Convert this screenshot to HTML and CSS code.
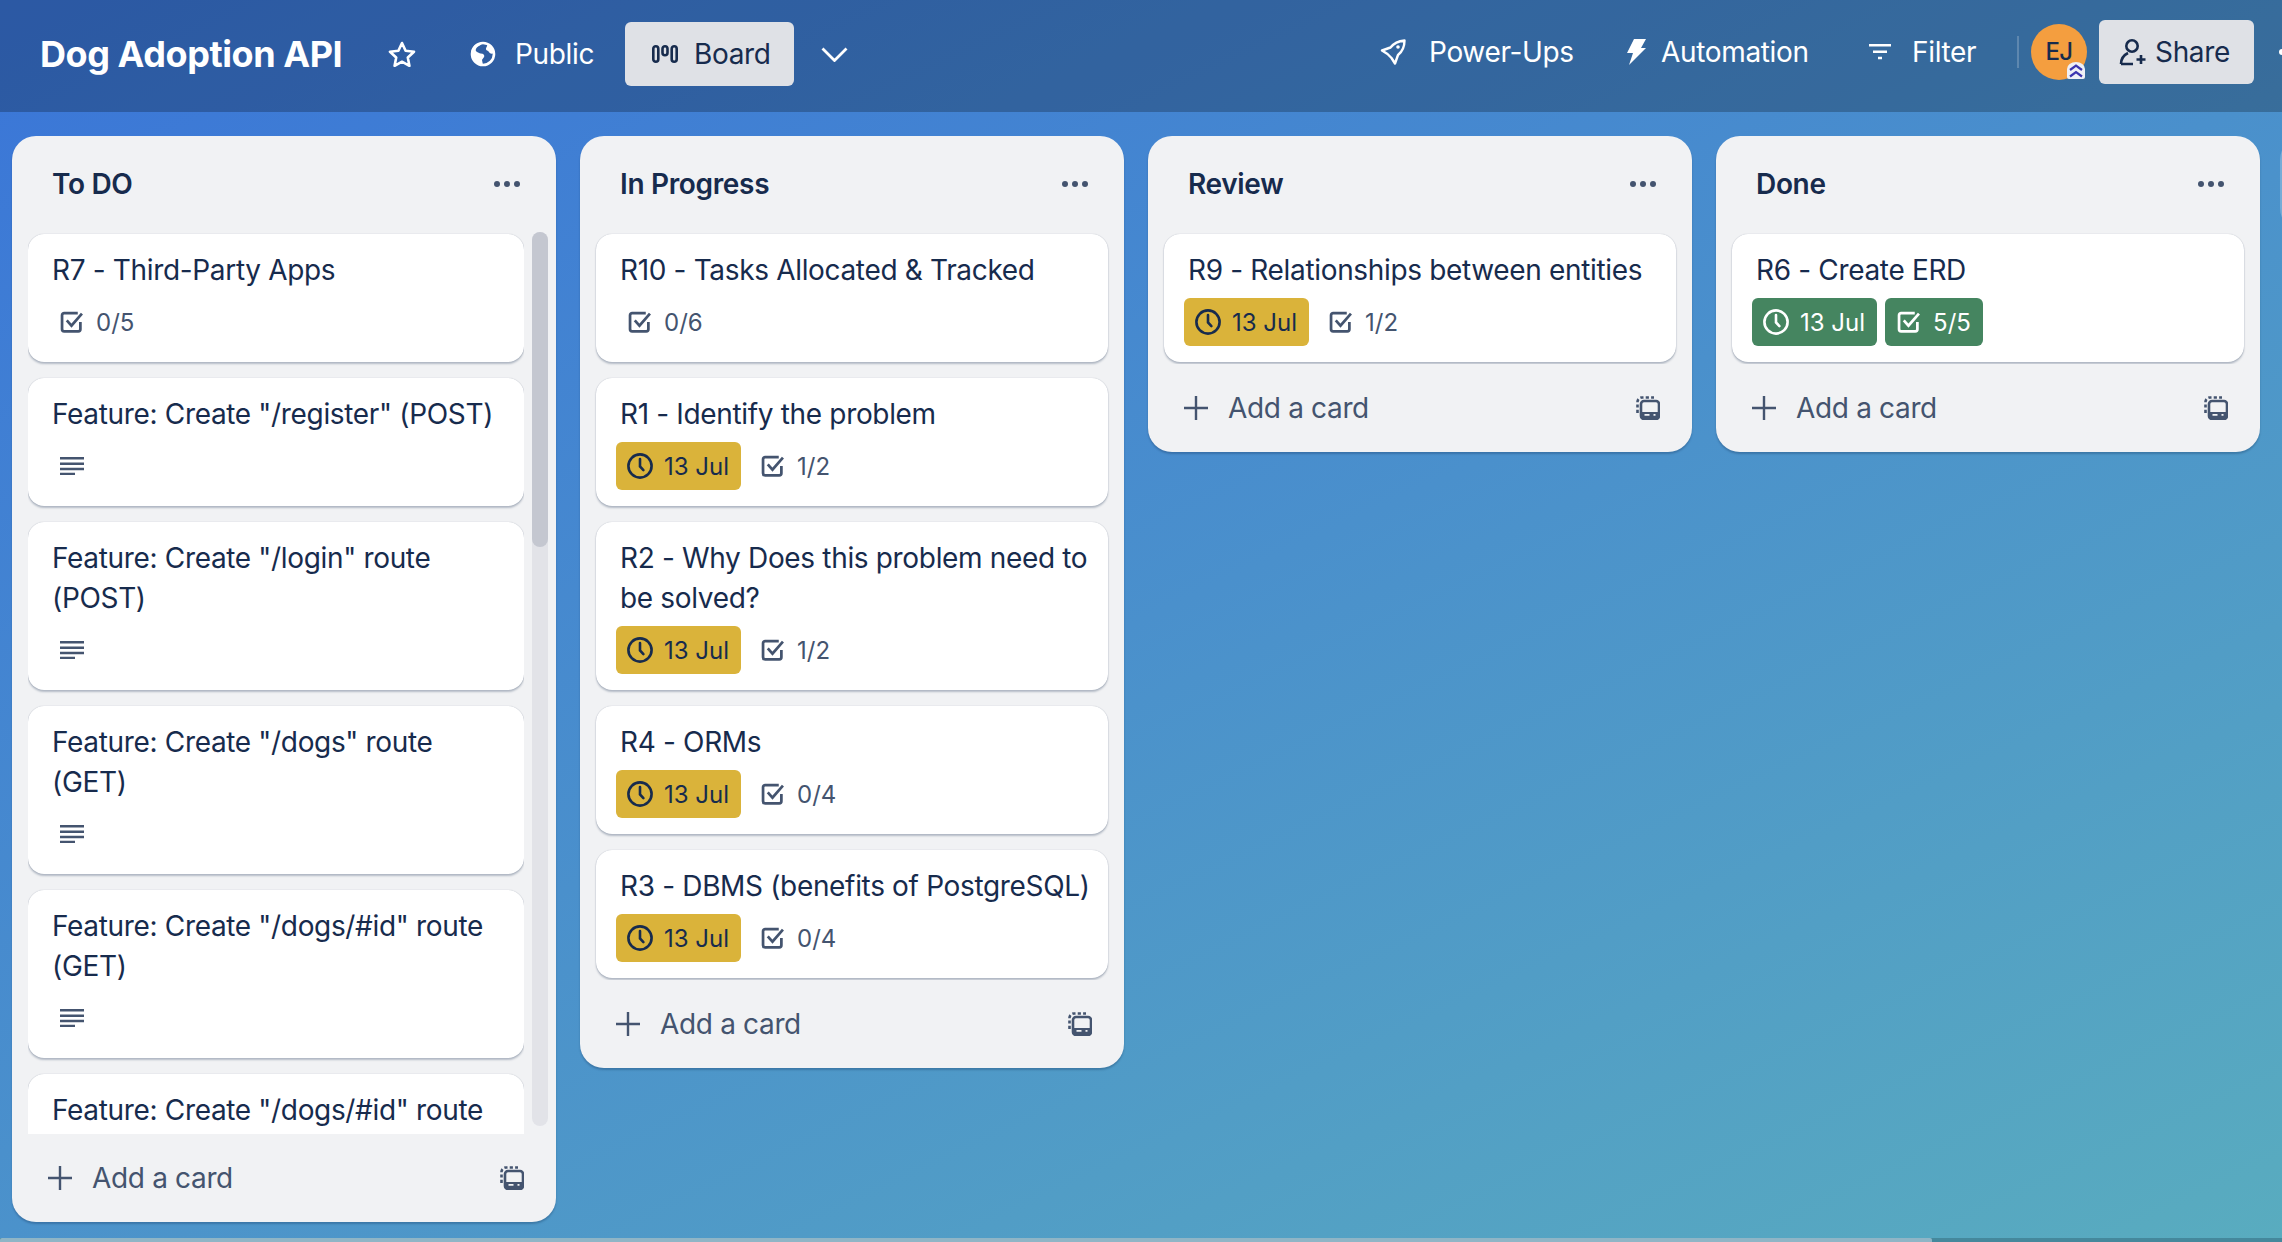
FILE: index.html
```html
<!DOCTYPE html>
<html lang="en">
<head>
    <meta charset="UTF-8">
    <title>Dog Adoption API | Trello</title>
    <link rel="stylesheet" href="styles.css">
</head>
<body>
    <!-- shared icons -->
    <svg class="defs" width="0" height="0">
        <symbol id="i-check" viewBox="0.5 1 21 21">
            <path d="M19 11.500V18.500a2 2 0 0 1-2 2H3.500a2 2 0 0 1-2-2V5a2 2 0 0 1 2-2h13" fill="none" stroke="currentColor" stroke-width="2.600"/>
            <path d="M6 10l4.500 5L20.500 3.500" fill="none" stroke="currentColor" stroke-width="2.600"/>
        </symbol>
        <symbol id="i-clock" viewBox="0 0 26 26">
            <circle cx="13" cy="13" r="11.600" fill="none" stroke="currentColor" stroke-width="2.600"/>
            <path d="M13 6v7.500l3.400 3.600" fill="none" stroke="currentColor" stroke-width="2.600" stroke-linecap="round"/>
        </symbol>
        <symbol id="i-desc" viewBox="0 0 24 18">
            <path d="M0 1.300h24M0 6.800h24M0 12h24M0 17h15" fill="none" stroke="currentColor" stroke-width="2.400"/>
        </symbol>
        <symbol id="i-plus" viewBox="0 0 24 24">
            <path d="M12 0v24M0 12h24" fill="none" stroke="currentColor" stroke-width="2.400"/>
        </symbol>
        <symbol id="i-template" viewBox="0 0 24 24">
            <path d="M1.500 17V6a4.500 4.500 0 0 1 4.500-4.500h12" fill="none" stroke="currentColor" stroke-width="2.600" stroke-dasharray="3.200 2.200"/>
            <rect x="5" y="5" width="18" height="18" rx="3" fill="none" stroke="currentColor" stroke-width="2.600"/>
            <path d="M5 16h18v5a2 2 0 0 1-2 2H7a2 2 0 0 1-2-2z" fill="currentColor"/>
            <path d="M8.500 18.800h5M17.500 18.800h2" stroke="#f1f2f4" stroke-width="1.800"/>
        </symbol>
    </svg>

    <header class="topbar">
        <h1 class="board-title">Dog Adoption API</h1>
        <svg class="tb-star" width="28" height="26" viewBox="0 0 28 26"><path d="M14 2l3.600 7.700 8.400 1-6.200 5.800 1.600 8.300L14 20.700 6.600 24.800l1.600-8.300L2 10.700l8.400-1z" fill="none" stroke="currentColor" stroke-width="2.600" stroke-linejoin="round"/></svg>
        <div class="tb-item tb-public">
            <svg width="26" height="26" viewBox="0 0 26 26"><circle cx="13" cy="13" r="11" fill="none" stroke="currentColor" stroke-width="2.600"/><path d="M12 2c-1 3-5 3-6 6-1 2 1 3 3 4s4 0 5 2-1 3-2 5l1 5C6 24 1 19 1 13S6 1 12 2zM17 3c2 1 6 4 7 9-2 1-4 1-5-1s-3-1-3-3 2-3 1-5z" fill="currentColor"/></svg>
            <span>Public</span>
        </div>
        <button class="tb-btn tb-board">
            <svg width="26" height="18" viewBox="0 0 26 18"><rect x="1.300" y="1.300" width="5" height="15.400" rx="2.500" fill="none" stroke="currentColor" stroke-width="2.600"/><rect x="10.500" y="1.300" width="5" height="9" rx="2.500" fill="none" stroke="currentColor" stroke-width="2.600"/><rect x="19.700" y="1.300" width="5" height="15.400" rx="2.500" fill="none" stroke="currentColor" stroke-width="2.600"/></svg>
            Board
        </button>
        <svg class="tb-chevron" width="27" height="15" viewBox="0 0 27 15"><path d="M1.500 1.500l12 12 12-12" fill="none" stroke="currentColor" stroke-width="2.800"/></svg>

        <div class="tb-right">
            <div class="tb-item tb-powerups">
                <svg width="26" height="26" viewBox="0 0 26 26"><path d="M24.500 1.500c-6 .5-10.500 2.500-14 7L2 11.500l5.500 3.500 4 4 3.500 5.500 3-8.500c4.500-3.500 6.500-8.500 6.500-14.500z" fill="none" stroke="currentColor" stroke-width="2.400" stroke-linejoin="round"/><circle cx="18" cy="8" r="1.800" fill="currentColor"/></svg>
                <span>Power-Ups</span>
            </div>
            <div class="tb-item tb-automation">
                <svg width="20" height="26" viewBox="0 0 20 26"><path d="M8 0h12l-5 9h5L3 26l4-12H1z" fill="currentColor"/></svg>
                <span>Automation</span>
            </div>
            <div class="tb-item tb-filter">
                <svg width="22" height="16" viewBox="0 0 22 16"><path d="M0 1.300h22M4 7.800h14M9 14h4" fill="none" stroke="currentColor" stroke-width="2.600"/></svg>
                <span>Filter</span>
            </div>
            <div class="tb-sep"></div>
            <div class="avatar">
                EJ
                <svg class="avatar-badge" width="18" height="17" viewBox="0 0 18 17"><path d="M0 7a9 7 0 0 1 18 0v8a2 2 0 0 1-2 2H2a2 2 0 0 1-2-2z" fill="#eef0f6"/><path d="M3 8l6-4.500L15 8M3 14.500L9 10l6 4.500" fill="none" stroke="#3b35b0" stroke-width="2.200"/></svg>
            </div>
            <button class="tb-btn tb-share">
                <svg width="28" height="28" viewBox="0 0 28 28"><circle cx="13" cy="8" r="5.700" fill="none" stroke="currentColor" stroke-width="2.600"/><path d="M2 26c0-6 3-9 7-11M14 26H2" fill="none" stroke="currentColor" stroke-width="2.600"/><path d="M22 17v9M17.500 21.500h9" stroke="currentColor" stroke-width="2.600"/></svg>
                Share
            </button>
            <span class="tb-more"></span>
        </div>
    </header>

    <main class="board">
        <section class="list list-scroll">
            <h2 class="list-head">To DO <span class="dots"><i></i><i></i><i></i></span></h2>
            <div class="list-body">
                <div class="cards">
                    <article class="card">
                        <p class="card-title">R7 - Third-Party Apps</p>
                        <div class="badges">
                            <span class="badge"><svg><use href="#i-check"/></svg>0/5</span>
                        </div>
                    </article>
                    <article class="card">
                        <p class="card-title">Feature: Create "/register" (POST)</p>
                        <div class="badges"><span class="badge"><svg class="ic-desc"><use href="#i-desc"/></svg></span></div>
                    </article>
                    <article class="card">
                        <p class="card-title">Feature: Create "/login" route (POST)</p>
                        <div class="badges"><span class="badge"><svg class="ic-desc"><use href="#i-desc"/></svg></span></div>
                    </article>
                    <article class="card">
                        <p class="card-title">Feature: Create "/dogs" route (GET)</p>
                        <div class="badges"><span class="badge"><svg class="ic-desc"><use href="#i-desc"/></svg></span></div>
                    </article>
                    <article class="card">
                        <p class="card-title">Feature: Create "/dogs/#id" route (GET)</p>
                        <div class="badges"><span class="badge"><svg class="ic-desc"><use href="#i-desc"/></svg></span></div>
                    </article>
                    <article class="card">
                        <p class="card-title">Feature: Create "/dogs/#id" route</p>
                        <div class="badges"><span class="badge"><svg class="ic-desc"><use href="#i-desc"/></svg></span></div>
                    </article>
                </div>
                <div class="scrolltrack"><div class="scrollthumb"></div></div>
            </div>
            <footer class="list-foot">
                <svg class="ic-plus"><use href="#i-plus"/></svg>
                <span>Add a card</span>
                <svg class="ic-template"><use href="#i-template"/></svg>
            </footer>
        </section>

        <section class="list">
            <h2 class="list-head">In Progress <span class="dots"><i></i><i></i><i></i></span></h2>
            <div class="cards">
                <article class="card">
                    <p class="card-title">R10 - Tasks Allocated &amp; Tracked</p>
                    <div class="badges">
                        <span class="badge"><svg><use href="#i-check"/></svg>0/6</span>
                    </div>
                </article>
                <article class="card">
                    <p class="card-title">R1 - Identify the problem</p>
                    <div class="badges">
                        <span class="badge badge-due"><svg class="ic-clock"><use href="#i-clock"/></svg>13 Jul</span>
                        <span class="badge"><svg><use href="#i-check"/></svg>1/2</span>
                    </div>
                </article>
                <article class="card">
                    <p class="card-title">R2 - Why Does this problem need to be solved?</p>
                    <div class="badges">
                        <span class="badge badge-due"><svg class="ic-clock"><use href="#i-clock"/></svg>13 Jul</span>
                        <span class="badge"><svg><use href="#i-check"/></svg>1/2</span>
                    </div>
                </article>
                <article class="card">
                    <p class="card-title">R4 - ORMs</p>
                    <div class="badges">
                        <span class="badge badge-due"><svg class="ic-clock"><use href="#i-clock"/></svg>13 Jul</span>
                        <span class="badge"><svg><use href="#i-check"/></svg>0/4</span>
                    </div>
                </article>
                <article class="card">
                    <p class="card-title">R3 - DBMS (benefits of PostgreSQL)</p>
                    <div class="badges">
                        <span class="badge badge-due"><svg class="ic-clock"><use href="#i-clock"/></svg>13 Jul</span>
                        <span class="badge"><svg><use href="#i-check"/></svg>0/4</span>
                    </div>
                </article>
            </div>
            <footer class="list-foot">
                <svg class="ic-plus"><use href="#i-plus"/></svg>
                <span>Add a card</span>
                <svg class="ic-template"><use href="#i-template"/></svg>
            </footer>
        </section>

        <section class="list">
            <h2 class="list-head">Review <span class="dots"><i></i><i></i><i></i></span></h2>
            <div class="cards">
                <article class="card">
                    <p class="card-title">R9 - Relationships between entities</p>
                    <div class="badges">
                        <span class="badge badge-due"><svg class="ic-clock"><use href="#i-clock"/></svg>13 Jul</span>
                        <span class="badge"><svg><use href="#i-check"/></svg>1/2</span>
                    </div>
                </article>
            </div>
            <footer class="list-foot">
                <svg class="ic-plus"><use href="#i-plus"/></svg>
                <span>Add a card</span>
                <svg class="ic-template"><use href="#i-template"/></svg>
            </footer>
        </section>

        <section class="list">
            <h2 class="list-head">Done <span class="dots"><i></i><i></i><i></i></span></h2>
            <div class="cards">
                <article class="card">
                    <p class="card-title">R6 - Create ERD</p>
                    <div class="badges">
                        <span class="badge badge-done"><svg class="ic-clock"><use href="#i-clock"/></svg>13 Jul</span>
                        <span class="badge badge-done"><svg><use href="#i-check"/></svg>5/5</span>
                    </div>
                </article>
            </div>
            <footer class="list-foot">
                <svg class="ic-plus"><use href="#i-plus"/></svg>
                <span>Add a card</span>
                <svg class="ic-template"><use href="#i-template"/></svg>
            </footer>
        </section>

        <div class="add-list"></div>
    </main>

    <div class="hscroll"><div class="hscroll-thumb"></div></div>
</body>
</html>
```

FILE: styles.css
```css
* {
    box-sizing: border-box;
}
html, body {
    height: 100%;
}
body {
    margin: 0;
    display: flex;
    flex-direction: column;
    overflow: hidden;
    font-family: Inter, "Noto Sans", sans-serif;
    color: #172b4d;
    background: linear-gradient(155deg, #3a75d8 0%, #4a90cc 50%, #59acbf 100%);
}
.defs {
    position: absolute;
}

/* top bar */
.topbar {
    flex: none;
    height: 112px;
    display: flex;
    align-items: center;
    padding-left: 40px;
    padding-bottom: 4px;
    color: #fff;
    background: rgba(0, 0, 0, 0.24);
}
.board-title {
    margin: 0;
    font-size: 36px;
    font-weight: 700;
    line-height: 44px;
    letter-spacing: -0.012em;
    width: 348px;
}
.tb-star {
    flex: none;
    margin-right: 54px;
}
.tb-item {
    display: flex;
    align-items: center;
    font-size: 28px;
    line-height: 40px;
    letter-spacing: -0.012em;
}
.tb-public {
    gap: 19px;
    width: 155px;
}
.tb-btn {
    display: flex;
    align-items: center;
    font: inherit;
    font-size: 28px;
    letter-spacing: -0.012em;
    color: #172b4d;
    background: #dfe1e6;
    border: 0;
    border-radius: 6px;
}
.tb-board {
    height: 64px;
    width: 169px;
    padding-left: 27px;
    gap: 16px;
}
.tb-chevron {
    margin-left: 27px;
}
.tb-right {
    margin-left: auto;
    display: flex;
    align-items: center;
    height: 100%;
    padding-bottom: 4px;
}
.tb-powerups {
    gap: 23px;
    width: 246px;
}
.tb-automation {
    gap: 15px;
    width: 243px;
}
.tb-filter {
    gap: 21px;
    width: 148px;
}
.tb-sep {
    width: 2px;
    height: 32px;
    margin-right: 12px;
    background: rgba(255, 255, 255, 0.2);
}
.avatar {
    position: relative;
    width: 56px;
    height: 56px;
    margin-right: 12px;
    border-radius: 50%;
    background: #f49e3f;
    color: #172b4d;
    font-size: 24px;
    font-weight: 500;
    line-height: 56px;
    letter-spacing: -0.03em;
    text-align: center;
}
.avatar-badge {
    position: absolute;
    right: 2px;
    bottom: 1px;
}
.tb-share {
    width: 155px;
    height: 64px;
    padding-left: 20px;
    gap: 8px;
}
.tb-more {
    width: 6px;
    height: 6px;
    margin-left: 25px;
    margin-right: -3px;
    border-radius: 50%;
    background: #fff;
}

/* board */
.board {
    flex: 1;
    min-height: 0;
    display: flex;
    align-items: flex-start;
    gap: 24px;
    padding: 24px 0 16px 12px;
    overflow: hidden;
}
.list {
    flex: none;
    width: 544px;
    max-height: 100%;
    display: flex;
    flex-direction: column;
    background: #f1f2f4;
    border-radius: 24px;
    box-shadow: 0 2px 2px rgba(9, 30, 66, 0.25);
}
.list-scroll {
    height: 100%;
}
.list-head {
    flex: none;
    height: 96px;
    margin: 0;
    padding: 0 36px 0 40px;
    display: flex;
    align-items: center;
    justify-content: space-between;
    font-size: 28px;
    font-weight: 600;
    letter-spacing: -0.012em;
}
.dots {
    display: flex;
    gap: 4px;
}
.dots i {
    width: 6px;
    height: 6px;
    border-radius: 50%;
    background: #44546f;
}
.list-body {
    flex: 1;
    min-height: 0;
    display: flex;
    padding-left: 16px;
    padding-right: 8px;
    gap: 8px;
}
.cards {
    flex: 1;
    min-width: 0;
    min-height: 0;
    display: flex;
    flex-direction: column;
    gap: 16px;
    padding: 2px 16px;
    overflow: hidden;
}
.list-body .cards {
    padding: 2px 0 0;
}
.scrolltrack {
    flex: none;
    width: 16px;
    height: calc(100% - 8px);
    border-radius: 8px;
    background: #e2e3e8;
}
.scrollthumb {
    height: 315px;
    border-radius: 8px;
    background: #c4c7d0;
}
.card {
    flex: none;
    padding: 16px 20px 16px;
    background: #fff;
    border-radius: 16px;
    box-shadow: 0 2px 2px rgba(9, 30, 66, 0.25), 0 0 1px rgba(9, 30, 66, 0.31);
}
.card-title {
    margin: 0 -4px 8px 4px;
    font-size: 28px;
    line-height: 40px;
    letter-spacing: -0.012em;
}
.badges {
    display: flex;
    gap: 8px;
}
.badge {
    display: flex;
    align-items: center;
    gap: 8px;
    height: 48px;
    padding: 0 12px 0 8px;
    font-size: 24px;
    color: #44546f;
    border-radius: 6px;
}
.badge svg {
    flex: none;
    width: 32px;
    height: 22px;
}
.badge svg.ic-desc {
    height: 18px;
}
.badge svg.ic-clock {
    height: 26px;
}
.badge-due {
    color: #172b4d;
    background: #dab33a;
}
.badge-done {
    color: #fff;
    background: #458560;
}
.list-foot {
    flex: none;
    height: 88px;
    display: flex;
    align-items: center;
    padding: 0 32px 0 36px;
    font-size: 28px;
    letter-spacing: -0.012em;
    color: #44546f;
}
.ic-plus {
    flex: none;
    width: 24px;
    height: 24px;
    margin-right: 20px;
}
.ic-template {
    flex: none;
    width: 24px;
    height: 24px;
    margin-left: auto;
}
.add-list {
    flex: none;
    width: 544px;
    height: 96px;
    margin-left: -4px;
    border-radius: 24px;
    background: rgba(255, 255, 255, 0.24);
}

/* page scrollbar along the bottom */
.hscroll {
    flex: none;
    height: 4px;
    background: #45889c;
}
.hscroll-thumb {
    width: 1932px;
    height: 100%;
    border-radius: 2px 2px 0 0;
    background: #8fb5c6;
}
```
